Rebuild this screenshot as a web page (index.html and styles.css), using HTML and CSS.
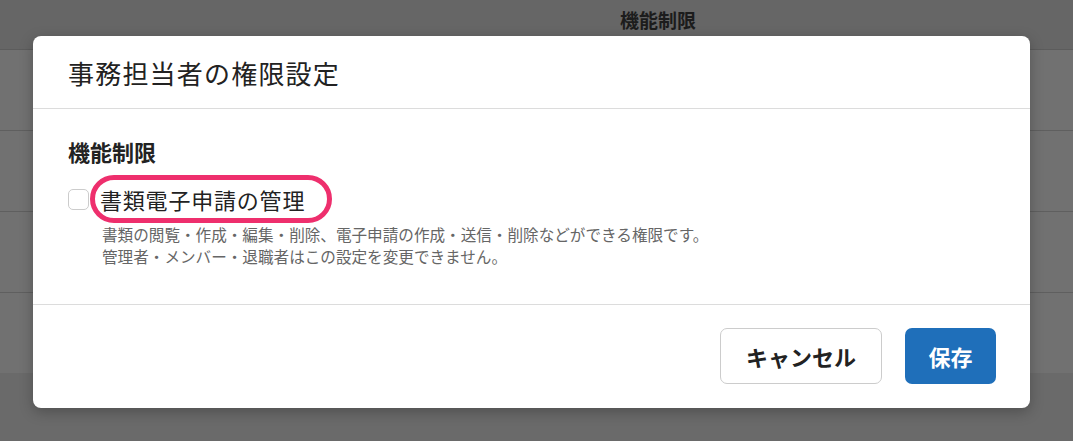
FILE: index.html
```html
<!DOCTYPE html>
<html lang="ja">
<head>
  <meta charset="UTF-8">
  <title>事務担当者の権限設定</title>
  <link rel="stylesheet" href="styles.css">
</head>
<body>
<div class="fondo">
  <div class="tabla-cabecera">
    <span class="col-titulo">機能制限</span>
  </div>
  <div class="fila"></div>
  <div class="fila"></div>
  <div class="fila"></div>
  <div class="fila"></div>
</div>

<div class="modal">
  <div class="modal-cabecera">
    <h2>事務担当者の権限設定</h2>
  </div>
  <div class="modal-cuerpo">
    <h3>機能制限</h3>
    <div class="opcion">
      <span class="casilla"></span>
      <span class="etiqueta">書類電子申請の管理<span class="marca"></span></span>
    </div>
    <p class="descripcion">書類の閲覧・作成・編集・削除、電子申請の作成・送信・削除などができる権限です。<br>管理者・メンバー・退職者はこの設定を変更できません。</p>
  </div>
  <div class="modal-pie">
    <button class="btn-cancelar">キャンセル</button>
    <button class="btn-guardar">保存</button>
  </div>
</div>
</body>
</html>
```

FILE: styles.css
```css
body {
  margin: 0;
  padding: 0;
  font-family: "Noto Sans CJK JP", "Noto Sans", sans-serif;
  background-color: #6a6a6a;
  color: #222;
}

.fondo {
  display: flex;
  flex-direction: column;
}

.tabla-cabecera {
  height: 49px;
  background-color: #666;
  border-bottom: 1px solid #5c5c5c;
  display: flex;
  align-items: center;
  padding-left: 620px;
}

.col-titulo {
  font-size: 19px;
  font-weight: bold;
  color: #1c1c1c;
  margin-top: -10px;
}

.fila {
  height: 80px;
  background-color: #717171;
  border-bottom: 1px solid #5f5f5f;
}

.fila:last-child {
  border-bottom: none;
}

.modal {
  position: absolute;
  top: 36px;
  left: 33px;
  width: 997px;
  height: 372px;
  background: #fff;
  border-radius: 8px;
  box-shadow: 0 4px 14px rgba(0,0,0,0.25);
  display: flex;
  flex-direction: column;
}

.modal-cabecera {
  height: 72px;
  border-bottom: 1px solid #dcdcdc;
  display: flex;
  align-items: center;
  padding: 0 35px;
}

.modal-cabecera h2 {
  margin: 0;
  font-size: 26px;
  font-weight: normal;
  letter-spacing: 1.2px;
  color: #222;
}

.modal-cuerpo {
  height: 196px;
  border-bottom: 1px solid #dcdcdc;
  padding: 26px 35px 0;
  box-sizing: border-box;
}

.modal-cuerpo h3 {
  margin: 0;
  font-size: 22px;
  font-weight: bold;
  line-height: 32px;
}

.opcion {
  display: flex;
  align-items: center;
  gap: 11px;
  margin-top: 16px;
}

.casilla {
  width: 19px;
  height: 19px;
  border: 1.5px solid #ccc;
  border-radius: 5px;
}

.etiqueta {
  position: relative;
  font-size: 22px;
  line-height: 32px;
  letter-spacing: 0.8px;
}

.marca {
  position: absolute;
  left: -10px;
  top: -8px;
  width: 232px;
  height: 38px;
  border: 5px solid #ee2f6d;
  border-radius: 24px;
}

.descripcion {
  margin: 8px 0 0 34px;
  font-size: 15.6px;
  line-height: 22px;
  color: #666;
}

.modal-pie {
  flex: 1;
  display: flex;
  justify-content: flex-end;
  align-items: flex-start;
  gap: 23px;
  padding: 23px 34px 0;
}

button {
  height: 56px;
  border-radius: 7px;
  font-family: inherit;
  font-size: 22px;
  font-weight: bold;
  cursor: pointer;
}

.btn-cancelar {
  width: 162px;
  background: #fff;
  border: 1px solid #ccc;
  color: #222;
}

.btn-guardar {
  width: 91px;
  background: #1f6fba;
  border: none;
  color: #fff;
}
```
